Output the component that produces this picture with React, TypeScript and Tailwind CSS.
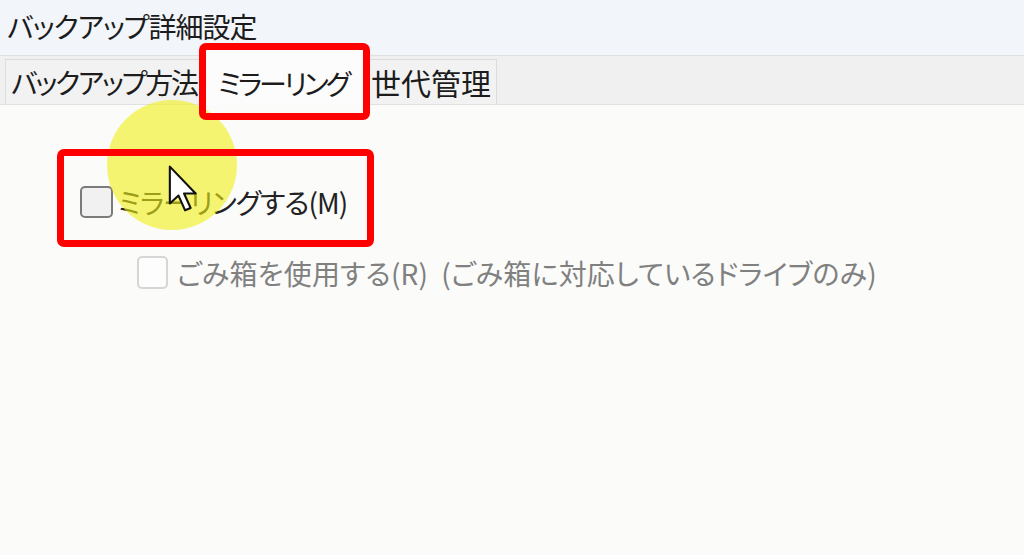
const jp = "font-['Noto_Sans_CJK_JP','Noto_Sans',sans-serif] [font-feature-settings:'palt']";

const Checkbox = ({ disabled }: { disabled?: boolean }) => (
  <span
    className={
      disabled
        ? 'inline-block w-[31px] h-[33px] rounded-[5px] border-2 border-[#d6d6d6] bg-[#fdfdfd] shrink-0'
        : 'inline-block w-[33px] h-[32px] rounded-[5px] border-2 border-[#7b7b7b] bg-[#f1f1f1] shrink-0'
    }
  />
);

const Cursor = () => (
  <svg width="34" height="50" viewBox="0 0 12 19" className="absolute left-[166px] top-[164px]">
    <path
      d="M1 1 L1 15 L4.3 12 L6.8 17.6 L8.9 16.7 L6.4 11.2 L10.8 11.2 Z"
      fill="#ffffff"
      stroke="#111111"
      strokeWidth="0.8"
      strokeLinejoin="round"
    />
  </svg>
);

export default function App() {
  return (
    <div className={`relative w-[1024px] h-[555px] overflow-hidden bg-[#fbfbfa] text-[#1c1c1c] ${jp}`}>
      {/* タイトル */}
      <div className="h-[55px] bg-[#f2f5fa] pl-[7px] pb-[3px] flex items-center text-[28px] tracking-[-1px] leading-none">
        バックアップ詳細設定
      </div>

      {/* タブ */}
      <div className="h-[50px] bg-[#f0f0f0] border-t border-b border-[#e0e0e0] flex items-end pl-[5px]">
        <div className="h-[45px] w-[198px] pl-[5px] border border-b-0 border-[#dcdcdc] bg-[#f2f2f2] flex items-center text-[28px] tracking-[-2.2px] leading-none whitespace-nowrap">
          バックアップ方法
        </div>
        <div className="h-[56px] -mb-px w-[162px] bg-[#fcfcfc] border border-b-0 border-[#dcdcdc] flex items-center pl-[14px] pt-[10px] text-[28px] tracking-[-3px] leading-none whitespace-nowrap">
          ミラーリング
        </div>
        <div className="h-[45px] w-[132px] pl-[5px] border border-b-0 border-[#dcdcdc] bg-[#f2f2f2] flex items-center text-[30px] leading-none whitespace-nowrap">
          世代管理
        </div>
      </div>

      {/* 内容 */}
      <div className="pt-[81px] pl-[80px] flex flex-col gap-[38px]">
        <label className="flex items-center gap-[5px] text-[28px] tracking-[-1px] leading-none text-[#222]">
          <Checkbox />
          <span>ミラーリングする(M)</span>
        </label>
        <label className="ml-[57px] flex items-center gap-[9px] text-[28px] tracking-[0.2px] leading-none text-[#808080]">
          <Checkbox disabled />
          <span className="whitespace-pre">ごみ箱を使用する(R)  (ごみ箱に対応しているドライブのみ)</span>
        </label>
      </div>

      {/* 注釈 */}
      <div className="absolute left-[107px] top-[100px] w-[130px] h-[130px] rounded-full bg-[rgba(240,240,20,0.6)]" />
      <div className="absolute left-[199px] top-[43px] w-[171px] h-[77px] rounded-[7px] border-[7px] border-[#ff0000]" />
      <div className="absolute left-[57px] top-[149px] w-[317px] h-[98px] rounded-[7px] border-[7px] border-[#ff0000]" />
      <Cursor />
    </div>
  );
}
